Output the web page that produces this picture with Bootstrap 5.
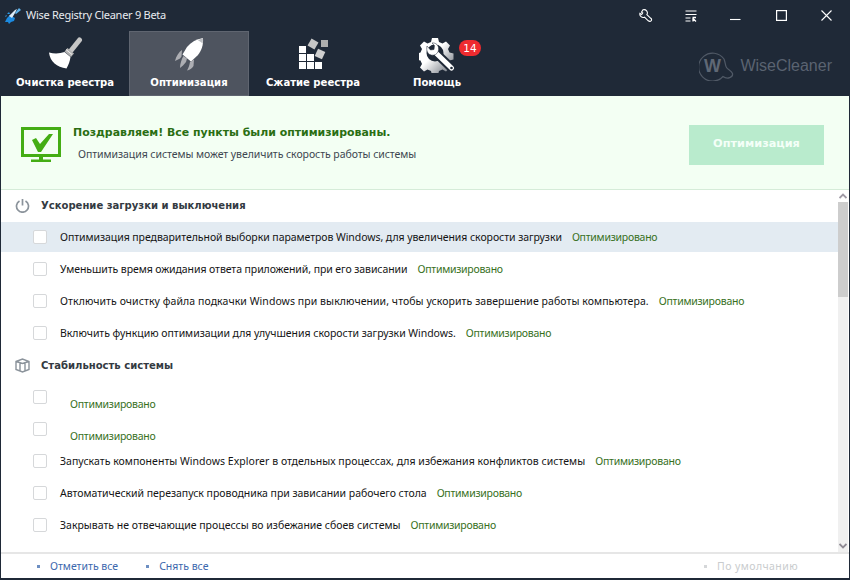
<!DOCTYPE html>
<html lang="ru">
<head>
<meta charset="utf-8">
<title>Wise Registry Cleaner 9 Beta</title>
<link href="https://cdn.jsdelivr.net/npm/bootstrap@5.3.0/dist/css/bootstrap.min.css" rel="stylesheet">
<style>
html,body{height:100%;overflow:hidden}
body{background:#1f2937;font-family:"Noto Sans","DejaVu Sans",sans-serif;font-size:10.5px;letter-spacing:-.06px;color:#111}
.appframe{width:850px;height:580px;padding:0 1px 2px 1px}
.titlebar{height:31px;color:#fff;padding-left:4px}
.titlebar .apptitle{margin-left:5px;font-size:11px;letter-spacing:-.27px;color:#e8ebef}
.winbtn{width:45px;height:31px}
.winbtn.nudged{padding-right:2px}
.toolbar{height:65px;padding-left:4px}
.tabitem{width:120px;height:65px;margin-right:4px;border:1px solid transparent;position:relative;color:#fff;font-family:"DejaVu Sans",sans-serif;font-weight:700;font-size:10.1px;padding-top:5px;letter-spacing:-.02px}
.tabitem.active-tab{background:#4e545f;border-color:#5f6570}
.tabicon{height:36px}
.tabicon svg{display:block}
.tablabel{line-height:14px;margin-top:3px;white-space:nowrap}
.countbadge{position:absolute;left:81px;top:8px;width:22px;height:16px;border-radius:8px;background:#ee2b2f;color:#fff;font-weight:400;font-size:10.500px;line-height:16px;text-align:center}
.brandmark{margin-left:auto;margin-right:17px;color:#5a6371;font-family:"Liberation Sans",sans-serif;font-size:16px;letter-spacing:0;margin-top:4px}
.brandword{margin-left:6px}
.contentpane{background:#fff;height:482px}
.bannerbox{height:94px;background:#f3fff3;border-bottom:1px solid #d5ecd8;padding:4px 25px 0 20px}
.bannerhead{color:#2a6e12;font-family:"DejaVu Sans",sans-serif;font-weight:700;font-size:10.930px;letter-spacing:0;line-height:16px}
.bannersub{color:#3d4650;margin-left:5px;margin-top:5px;line-height:16px}
.bannertext{margin-left:10px;margin-top:-2px}
.bigbtn{width:135px;height:40px;background:#b9ebcd;color:#f4fff8;font-family:"DejaVu Sans",sans-serif;font-weight:700;font-size:11.300px;letter-spacing:0;border:0;border-radius:0;padding:0}
.listarea{height:362px}
.rowsbox{width:837px;overflow:hidden;height:362px}
.grouphead{height:30px;margin-bottom:2px;padding:1px 0 0 14px;font-family:"DejaVu Sans",sans-serif;font-weight:700;font-size:10.050px;letter-spacing:0;color:#333a42}
.grouphead span{margin-left:11px}
.itemrow{height:30px;margin-bottom:2px;padding-left:32px;white-space:nowrap}
.itemrow.rowhover{background:#e3ebf2}
.tick{width:14px;height:14px;border:1px solid #d6d8da;border-radius:2px;background:#fff;flex:none;margin-right:13px}
.itemname,.okstate{padding-top:2px}
.okstate{color:#37701c;margin-left:10px;letter-spacing:-.26px}
.itemname{color:#141414}
.itemname.fit-long{letter-spacing:.07px}
.itemname.fit-mid{letter-spacing:.03px}
.itemname.fit-flat{letter-spacing:0}
.itemname.fit-short{letter-spacing:-.03px}
.itemname.fit-tiny{letter-spacing:-.08px}
.blankname .okstate{position:relative;top:7px}
.scrolltrack{width:10px;height:362px;background:#f0f0f0}
.scrollend{height:12px;background:#fff}
.scrollend.lower{background:#f0f0f0}
.scrollthumb{height:95px;background:#cdcdcd}
.footbar{height:26px;border-top:2px solid #e6e6e6;padding:2px 51px 0 36px;color:#3c68ad}
.footlink{margin-right:28px;letter-spacing:0}
.footlink i,.footdef i{display:inline-block;width:3px;height:3px;background:#6d8fc2;margin-right:10px;vertical-align:2px}
.footdef{margin-left:auto;color:#c9ccce;letter-spacing:.42px}
.footdef i{background:#d5d7d9}
</style>
</head>
<body>
<div class="appframe d-flex flex-column">
  <div class="titlebar d-flex align-items-center">
    <svg width="16" height="16" viewBox="5 8 16 16"><path d="M5 22l2-4 3-3 5 3-1 3-3 1-2 2-1-2z" fill="#1c8ae0"/><path d="M9 16l6-6 2-1-2 4-3 5z" fill="#dcecf8"/><path d="M15 13l4-5 2 2-5 4z" fill="#5db4ee"/><path d="M7 14l2-2 1 2zM6 17l-1-1 2-1z" fill="#2d9ce8"/></svg>
    <span class="apptitle">Wise Registry Cleaner 9 Beta</span>
    <div class="ms-auto d-flex">
      <div class="winbtn nudged d-flex align-items-center justify-content-center"><svg width="14" height="13" viewBox="0 0 14 13" fill="none" stroke="#fff" stroke-width="1.100"><path d="M4 .8L2.500 3.200l1.200.8-1 1.500L.9 4.300a3.400 3.400 0 0 0 4.600 3.900L9.300 11.800c1.300 1 2.300.6 3-.2.500-.8.500-1.500-.5-2.300L7.900 5.600A3.300 3.300 0 0 0 4 .8z"/></svg></div>
      <div class="winbtn nudged d-flex align-items-center justify-content-center"><svg width="12" height="12" viewBox="0 0 12 12" fill="none" stroke="#fff"><path d="M.5 1h11M.5 4.500h11M.5 8h5M.5 11h5"/><path d="M7.500 7.500h3.500M8 8v3.500M8 8.500l3 3" stroke-width="1.300"/></svg></div>
      <div class="winbtn nudged d-flex align-items-center justify-content-center"><svg width="11" height="11" viewBox="0 0 11 11"><path d="M0 9.500h10.500" stroke="#fff" stroke-width="1.100"/></svg></div>
      <div class="winbtn d-flex align-items-center justify-content-center"><svg width="11" height="11" viewBox="0 0 11 11" fill="none"><rect x=".6" y=".6" width="9.800" height="9.800" stroke="#fff" stroke-width="1.200"/></svg></div>
      <div class="winbtn d-flex align-items-center justify-content-center"><svg width="11" height="11" viewBox="0 0 11 11"><path d="M.5 .5l10 10M10.500 .5l-10 10" stroke="#fff" stroke-width="1.100"/></svg></div>
    </div>
  </div>
  <div class="toolbar d-flex">
    <div class="tabitem d-flex flex-column align-items-center">
      <div class="tabicon"><svg width="36" height="36" viewBox="47 37 36 36"><path d="M71.500 50L79.500 40" stroke="#c6c6c6" stroke-width="5" stroke-linecap="round"/><path d="M64.500 51.500l3-3.500 6.500 5.500-3 3.500z" fill="#b4b4b4"/><path d="M66 49.500l6 5" stroke="#eee" stroke-width="1"/><path d="M49 52.500c6 1.500 11 1 15.500-.5l6 5c-.5 4-2 8-4 11.500C57 67 50 62 49 52.500z" fill="#fff"/></svg></div>
      <div class="tablabel">Очистка реестра</div>
    </div>
    <div class="tabitem active-tab d-flex flex-column align-items-center">
      <div class="tabicon"><svg width="36" height="36" viewBox="171 37 36 36"><path d="M203 38c.5 7-1.500 13-5.500 17.500L191 61.500l-8.500-7L187 47c4-5 9.500-8 16-9z" fill="#fff"/><path d="M203 38l-.3 5.500c-1.500-1.300-3-2.300-4.800-3.300z" fill="#bdbfc3"/><path d="M182 50c-3 2-6 6-7 11l5-2.500 1.500-2zM183.500 56c-2 3-3.500 8-3.500 12 2-1.500 4-3.500 6-6l1-3.500zM190 62c-.5 3-1.500 6-3 8.500 2.500-.5 5-2 6.500-4.500l.5-6.500z" fill="#adaeb3"/></svg></div>
      <div class="tablabel">Оптимизация</div>
    </div>
    <div class="tabitem d-flex flex-column align-items-center">
      <div class="tabicon"><svg width="36" height="36" viewBox="295 37 36 36"><g fill="#fff"><rect x="299" y="46" width="7" height="7"/><rect x="299" y="54" width="7" height="7"/><rect x="307" y="54" width="7" height="7"/><rect x="299" y="62" width="7" height="7"/><rect x="307" y="62" width="7" height="7"/><rect x="315" y="62" width="7" height="7"/></g><rect x="309" y="40" width="8" height="8" fill="#c6c6c6" transform="rotate(30 313 44)"/><rect x="321" y="40" width="7" height="7" fill="#adadad"/><rect x="316" y="50" width="8" height="8" fill="#cfcfcf" transform="rotate(25 320 54)"/></svg></div>
      <div class="tablabel">Сжатие реестра</div>
    </div>
    <div class="tabitem d-flex flex-column align-items-center">
      <div class="tabicon"><svg width="36" height="36" viewBox="419 37 36 36"><defs><linearGradient id="gearfade" x1="0" y1="0" x2="1" y2="1"><stop offset=".45" stop-color="#fff"/><stop offset="1" stop-color="#59606b"/></linearGradient></defs><g fill="url(#gearfade)"><path fill-rule="evenodd" d="M432 38h6l1 4 3.500 1.500 3.500-2 4 4-2 3.500 1.500 3.500 4 1v6l-4 1-1.500 3.500 2 3.500-4 4-3.500-2-3.500 1.500-1 4h-6l-1-4-3.500-1.500-3.500 2-4-4 2-3.500-1.500-3.500-4-1v-6l4-1 1.500-3.500-2-3.500 4-4 3.500 2 3.500-1.500zM435 44.500a8.500 8.500 0 1 0 0 17 8.500 8.500 0 0 0 0-17z"/></g><path d="M437 54l14 13.500" stroke="#1f2937" stroke-width="9"/><path d="M436 53l15.500 15" stroke="#fff" stroke-width="5" stroke-linecap="round"/><path d="M427 46l3.500 4 3.500-.5.500-4-2.500-2.500c3-.5 6 1.500 6.500 4.500s-.5 5.500-3 7c-3 1.500-6 .5-7.500-1.500s-1.500-5-1-7z" fill="#fff" stroke="#1f2937" stroke-width=".5"/><circle cx="451.500" cy="68" r="1.300" fill="#1f2937"/></svg></div>
      <div class="tablabel">Помощь</div>
      <div class="countbadge">14</div>
    </div>
    <div class="brandmark d-flex align-items-center">
      <svg width="35" height="30" viewBox="0 0 35 30" fill="none"><path d="M24 25.500A14 14 0 1 1 25 8c1.500 3.500 1 6 2.500 8.500 1.500 2.500 5 3 6 6 .8 3.500-5 6.500-9.500 3z" stroke="#505966" stroke-width="1.200"/><text x="5" y="21" fill="#5f6875" font-family="Liberation Sans" font-weight="700" font-size="18">W</text></svg>
      <span class="brandword">WiseCleaner</span>
    </div>
  </div>
  <div class="contentpane d-flex flex-column">
    <div class="bannerbox d-flex align-items-center">
      <svg width="42" height="36" viewBox="0 0 42 36"><rect x="1.500" y="1.500" width="37" height="27" fill="none" stroke="#44ad14" stroke-width="3"/><path d="M11 13l4-2 4 6 9-10h4L20 25h-3z" fill="#44ad14"/><path d="M18 30h4v2.500h8V35H10v-2.500h8z" fill="#44ad14"/></svg>
      <div class="bannertext">
        <div class="bannerhead">Поздравляем! Все пункты были оптимизированы.</div>
        <div class="bannersub">Оптимизация системы может увеличить скорость работы системы</div>
      </div>
      <button class="btn bigbtn ms-auto" type="button">Оптимизация</button>
    </div>
    <div class="listarea d-flex">
      <div class="rowsbox">
        <div class="grouphead d-flex align-items-center"><svg width="15" height="15" viewBox="0 0 15 15" fill="none" stroke="#8b939b" stroke-width="1.700"><path d="M4.500 3a6 6 0 1 0 6 0"/><path d="M7.500 1v6.500"/></svg><span>Ускорение загрузки и выключения</span></div>
        <div class="itemrow rowhover d-flex align-items-center"><div class="tick"></div><span class="itemname">Оптимизация предварительной выборки параметров Windows, для увеличения скорости загрузки</span><span class="okstate">Оптимизировано</span></div>
        <div class="itemrow d-flex align-items-center"><div class="tick"></div><span class="itemname fit-tiny">Уменьшить время ожидания ответа приложений, при его зависании</span><span class="okstate">Оптимизировано</span></div>
        <div class="itemrow d-flex align-items-center"><div class="tick"></div><span class="itemname fit-long">Отключить очистку файла подкачки Windows при выключении, чтобы ускорить завершение работы компьютера.</span><span class="okstate">Оптимизировано</span></div>
        <div class="itemrow d-flex align-items-center"><div class="tick"></div><span class="itemname fit-short">Включить функцию оптимизации для улучшения скорости загрузки Windows.</span><span class="okstate">Оптимизировано</span></div>
        <div class="grouphead d-flex align-items-center"><svg width="15" height="15" viewBox="0 0 15 15" fill="none" stroke="#8b939b" stroke-width="1.400"><path d="M1 3.500L7.500 1 14 3.500v8L7.500 14 1 11.500zM1 3.500l6.500 2 6.500-2M5 5v8.500M10 5v8.500"/></svg><span>Стабильность системы</span></div>
        <div class="itemrow blankname d-flex align-items-center"><div class="tick"></div><span class="okstate">Оптимизировано</span></div>
        <div class="itemrow blankname d-flex align-items-center"><div class="tick"></div><span class="okstate">Оптимизировано</span></div>
        <div class="itemrow d-flex align-items-center"><div class="tick"></div><span class="itemname fit-mid">Запускать компоненты Windows Explorer в отдельных процессах, для избежания конфликтов системы</span><span class="okstate">Оптимизировано</span></div>
        <div class="itemrow d-flex align-items-center"><div class="tick"></div><span class="itemname fit-short">Автоматический перезапуск проводника при зависании рабочего стола</span><span class="okstate">Оптимизировано</span></div>
        <div class="itemrow d-flex align-items-center"><div class="tick"></div><span class="itemname fit-flat">Закрывать не отвечающие процессы во избежание сбоев системы</span><span class="okstate">Оптимизировано</span></div>
      </div>
      <div class="scrolltrack d-flex flex-column">
        <div class="scrollend d-flex align-items-center justify-content-center"><svg width="8" height="6" viewBox="0 0 8 6" fill="none"><path d="M.5 5L4 1.500 7.500 5" stroke="#a09aa5" stroke-width="1.800"/></svg></div>
        <div class="scrollthumb"></div>
        <div class="scrollend lower mt-auto d-flex align-items-center justify-content-center"><svg width="8" height="6" viewBox="0 0 8 6" fill="none"><path d="M.5 1L4 4.500 7.500 1" stroke="#8f8a94" stroke-width="1.800"/></svg></div>
      </div>
    </div>
    <div class="footbar d-flex align-items-center">
      <span class="footlink"><i></i>Отметить все</span>
      <span class="footlink"><i></i>Снять все</span>
      <span class="footdef"><i></i>По умолчанию</span>
    </div>
  </div>
</div>
<script src="https://cdn.jsdelivr.net/npm/bootstrap@5.3.0/dist/js/bootstrap.bundle.min.js"></script>
</body>
</html>
